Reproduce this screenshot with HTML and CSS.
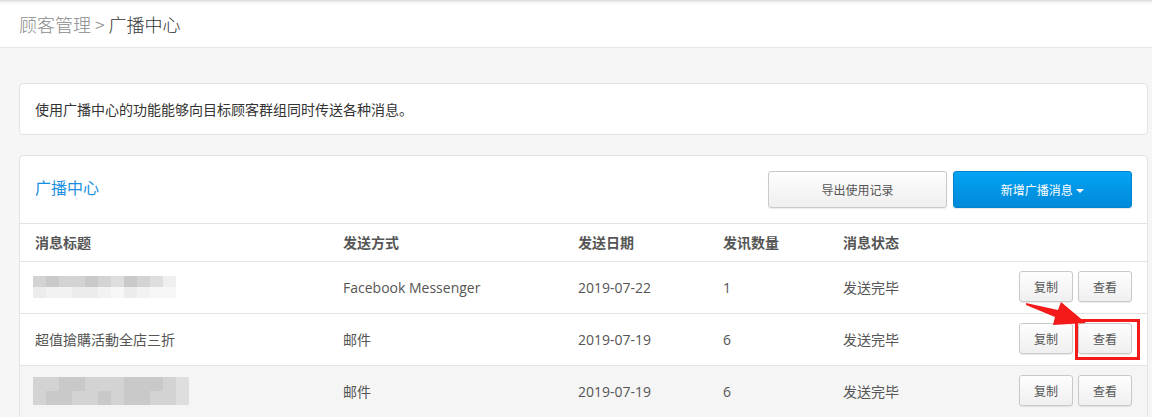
FILE: index.html
```html
<!DOCTYPE html>
<html lang="zh">
<head>
<meta charset="utf-8">
<title>广播中心</title>
<link rel="stylesheet" href="styles.css">
</head>
<body>
<div class="page">
  <header class="topbar">
    <span class="crumb-parent">顾客管理 &gt; </span><span class="crumb-current">广播中心</span>
  </header>
  <main class="content">
    <div class="card info-card">使用广播中心的功能能够向目标顾客群组同时传送各种消息。</div>
    <section class="card main-card">
      <div class="card-head">
        <h2 class="card-title">广播中心</h2>
        <div class="head-actions">
          <button class="btn btn-default btn-lg">导出使用记录</button>
          <button class="btn btn-primary btn-lg">新增广播消息 <span class="caret"></span></button>
        </div>
      </div>
      <table class="list">
        <colgroup>
          <col class="c1"><col class="c2"><col class="c3"><col class="c4"><col class="c5"><col class="c6">
        </colgroup>
        <thead>
          <tr><th>消息标题</th><th>发送方式</th><th>发送日期</th><th>发讯数量</th><th>消息状态</th><th></th></tr>
        </thead>
        <tbody>
          <tr>
            <td><div class="blur blur-a"><i class="d2"></i><i class="d1"></i><i class="d2"></i><i class="d2"></i><i class="d1"></i><i class="d2"></i><i class="d3"></i><i class="d1"></i><i class="d2"></i><i class="d3"></i><i class="d4"></i><i class="l1"></i><i class="l2"></i><i class="l2"></i><i class="l1"></i><i class="l1"></i><i class="l2"></i><i class="l3"></i><i class="l1"></i><i class="l2"></i><i class="l3"></i><i class="l3"></i></div></td>
            <td>Facebook Messenger</td><td>2019-07-22</td><td>1</td><td>发送完毕</td>
            <td class="acts"><button class="btn btn-default btn-sm">复制</button><button class="btn btn-default btn-sm">查看</button></td>
          </tr>
          <tr>
            <td>超值搶購活動全店三折</td>
            <td>邮件</td><td>2019-07-19</td><td>6</td><td>发送完毕</td>
            <td class="acts"><button class="btn btn-default btn-sm">复制</button><span class="highlight"><button class="btn btn-default btn-sm">查看</button></span></td>
          </tr>
          <tr class="hover">
            <td><div class="blur blur-b"><i class="d2"></i><i class="d2"></i><i class="d1"></i><i class="d1"></i><i class="d2"></i><i class="d2"></i><i class="d2"></i><i class="d1"></i><i class="d1"></i><i class="d1"></i><i class="d2"></i><i class="d3"></i><i class="d2"></i><i class="d1"></i><i class="d1"></i><i class="d2"></i><i class="d2"></i><i class="d1"></i><i class="d2"></i><i class="d1"></i><i class="d1"></i><i class="d2"></i><i class="d2"></i><i class="d3"></i></div></td>
            <td>邮件</td><td>2019-07-19</td><td>6</td><td>发送完毕</td>
            <td class="acts"><button class="btn btn-default btn-sm">复制</button><button class="btn btn-default btn-sm">查看</button></td>
          </tr>
        </tbody>
      </table>
    </section>
  </main>
  <svg class="arrow" width="70" height="34" viewBox="0 0 70 34">
    <path d="M6 7 L38 14 L41 6 L66 27 L33 29 L35 21 L6 9 Z" fill="#f41a1a"/>
  </svg>
</div>
</body>
</html>
```

FILE: styles.css
```css
* { box-sizing: border-box; }
html, body { margin: 0; padding: 0; }
body {
  font-family: "Open Sans", "Noto Sans CJK SC", sans-serif;
  background: #f6f6f6;
  color: #555;
  width: 1152px;
  height: 417px;
  overflow: hidden;
}
.page { position: relative; }
.topbar {
  height: 48px;
  background: linear-gradient(#d6d6d6 0, #f3f3f3 2px, #fff 5px, #fff 100%);
  border-bottom: 1px solid #e6e6e6;
  padding: 0 0 0 19px;
  display: flex;
  align-items: center;
  font-size: 18px;
  font-weight: 300;
  font-family: "Noto Sans CJK SC", "Open Sans", sans-serif;
}
.crumb-parent { color: #8a8a8a; white-space: pre; }
.crumb-current { color: #333; }
.content {
  padding: 35px 4px 0 19px;
  display: flex;
  flex-direction: column;
  gap: 20px;
}
.card {
  background: #fff;
  border: 1px solid #e4e4e4;
  border-radius: 4px;
}
.info-card {
  height: 52px;
  padding: 0 15px;
  display: flex;
  align-items: center;
  font-size: 14px;
  color: #333;
}
.card-head {
  height: 68px;
  display: flex;
  align-items: center;
  justify-content: space-between;
  padding: 0 15px 0 15px;
  border-bottom: 1px solid #e2e2e2;
}
.card-title {
  margin: -5px 0 0 0;
  font-size: 16px;
  font-weight: 400;
  color: #1a8fe0;
}
.head-actions { display: flex; gap: 6px; }
.btn {
  font-family: "Noto Sans CJK SC", "Open Sans", sans-serif;
  border-radius: 3px;
  cursor: pointer;
  padding: 0;
}
.btn-lg { width: 179px; height: 37px; font-size: 12px; }
.btn-default {
  background: linear-gradient(#fefefe, #efefef);
  border: 1px solid #c9c9c9;
  color: #555;
  box-shadow: 0 1px 1px rgba(0,0,0,0.08);
}
.btn-primary {
  background: linear-gradient(#05a3f3, #0089d9);
  border: 1px solid #0283cf;
  color: #fff;
  box-shadow: 0 1px 1px rgba(0,0,0,0.1);
}
.caret {
  display: inline-block;
  width: 0; height: 0;
  border-left: 4px solid transparent;
  border-right: 4px solid transparent;
  border-top: 4px solid #fff;
  vertical-align: middle;
  margin-left: 1px;
  position: relative;
  top: -1px;
}
.btn-sm { width: 54px; height: 31px; font-size: 12px; }
.list {
  width: 100%;
  border-collapse: collapse;
  table-layout: fixed;
  font-size: 14px;
}
.c1 { width: 323px; }
.c2 { width: 235px; }
.c3 { width: 145px; }
.c4 { width: 120px; }
.c5 { width: 150px; }
.list th {
  height: 37px;
  text-align: left;
  font-weight: 700;
  color: #555;
  padding: 0;
  border-bottom: 1px solid #e2e2e2;
  font-family: "Noto Sans CJK SC", sans-serif;
}
.list td {
  height: 52px;
  padding: 0;
  border-bottom: 1px solid #e2e2e2;
  color: #555;
}
.list th:first-child, .list td:first-child { padding-left: 15px; }
.list td.acts {
  padding-right: 15px;
  text-align: right;
  white-space: nowrap;
}
.acts .btn + .btn, .acts .highlight { margin-left: 5px; }
.acts .btn { vertical-align: middle; position: relative; top: -1px; }
.highlight { display: inline-block; vertical-align: middle; position: relative; }
.highlight::after {
  content: "";
  position: absolute;
  left: -3px; right: -8px; top: -5px; bottom: -5px;
  border: 3px solid #f41a1a;
  pointer-events: none;
}
tr.hover td { background: #f5f5f5; }
.blur {
  display: grid;
  grid-template-columns: repeat(11, 13px);
  grid-auto-rows: 11px;
  margin-left: -2px;
  filter: blur(0.6px);
}
.blur-b { grid-template-columns: repeat(12, 13px); grid-auto-rows: 14px; }
.blur i { display: block; }
.d1 { background: #c9c9c9; }
.d2 { background: #d3d3d3; }
.d3 { background: #dedede; }
.d4 { background: #efefef; }
.l1 { background: #ececec; }
.l2 { background: #f2f2f2; }
.l3 { background: #f7f7f7; }
.arrow {
  position: absolute;
  left: 1020px;
  top: 296px;
}
```
